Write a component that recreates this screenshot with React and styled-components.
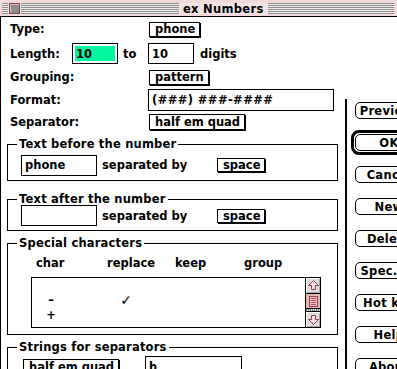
import React from "react";
import styled, { createGlobalStyle } from "styled-components";

const GlobalStyle = createGlobalStyle`
  html, body {
    margin: 0;
    padding: 0;
    background: #fff;
  }
  body {
    font-family: "DejaVu Sans", "Liberation Sans", sans-serif;
    font-weight: bold;
    font-size: 11.5px;
    color: #000;
  }
`;

const Window = styled.div`
  width: 397px;
  height: 369px;
  overflow: hidden;
  display: flex;
  flex-direction: column;
  background: #fff;
`;

const TitleBar = styled.div`
  height: 17px;
  box-sizing: border-box;
  flex-shrink: 0;
  background: #f3dada;
  border-bottom: 1px solid #000;
  padding: 3px 3px 2px 2px;
  display: flex;
`;

const Stripes = styled.div`
  flex: 1;
  display: flex;
  align-items: center;
  background: repeating-linear-gradient(
    to bottom,
    #8e8e8e 0 1px,
    #ececec 1px 2px
  );
`;

const CloseWrap = styled.div`
  height: 100%;
  background: #f3e4e4;
  padding: 0 1px;
  margin-left: 6px;
  display: flex;
  align-items: center;
`;

const CloseBox = styled.div`
  width: 11px;
  height: 11px;
  box-sizing: border-box;
  border: 1px solid #8a4040;
  background: #8d8d8d;
  box-shadow: inset 1px 1px 0 #d6c4c4;
`;

const Title = styled.div`
  height: 100%;
  display: flex;
  align-items: center;
  background: #f3e4e4;
  padding: 0 4px;
  margin-left: 158px;
  line-height: 12px;
  letter-spacing: 0.3px;
`;

const Body = styled.div`
  flex: 1;
  display: flex;
  border-left: 1px solid #000;
  min-height: 0;
`;

const LeftPane = styled.div`
  width: 344px;
  flex-shrink: 0;
  box-sizing: border-box;
  padding: 4px 0 0 6px;
`;

const Row = styled.div`
  display: flex;
  align-items: center;
  height: ${(p) => p.h}px;
  margin-top: ${(p) => p.mt || 0}px;
  padding-left: ${(p) => p.pl ?? 3}px;
`;

const Label = styled.span`
  display: inline-block;
  width: ${(p) => (p.w ? `${p.w}px` : "auto")};
  margin-left: ${(p) => p.ml || 0}px;
  white-space: nowrap;
  flex-shrink: 0;
`;

const Popup = styled.div`
  height: ${(p) => p.h || 15}px;
  box-sizing: border-box;
  border: 1px solid #000;
  box-shadow: 1px 1px 0 #000;
  background: #fff;
  padding: 0 4px 0 5px;
  display: flex;
  align-items: center;
  white-space: nowrap;
  margin-left: ${(p) => p.ml || 0}px;
`;

const TextField = styled.div`
  width: ${(p) => p.w}px;
  height: ${(p) => p.h || 21}px;
  box-sizing: border-box;
  border: 1px solid #000;
  padding: 2px;
  display: flex;
  flex-shrink: 0;
  margin-left: ${(p) => p.ml || 0}px;
`;

const FieldText = styled.span`
  flex: ${(p) => (p.selected ? 1 : "none")};
  background: ${(p) => (p.selected ? "#00f7a0" : "transparent")};
  display: flex;
  align-items: center;
  padding-left: 1px;
  white-space: nowrap;
  letter-spacing: ${(p) => p.ls || 0}px;
`;

const Group = styled.fieldset`
  width: 331px;
  box-sizing: border-box;
  margin: ${(p) => p.mt}px 0 0 0;
  border: 1px solid #000;
  padding: ${(p) => p.pt}px 0 ${(p) => p.pb}px 0;
  min-width: 0;
`;

const Legend = styled.legend`
  margin-left: 9px;
  padding: 0 2px;
  line-height: 12px;
  height: 12px;
  letter-spacing: 0.2px;
`;

const HeaderRow = styled.div`
  display: grid;
  grid-template-columns: 71px 68px 69px auto;
  padding-left: 28px;
  height: 14px;
  line-height: 14px;
`;

const ListBox = styled.div`
  width: 290px;
  height: 51px;
  box-sizing: border-box;
  margin: 7px 0 0 23px;
  border: 1px solid #000;
  display: flex;
`;

const ListRows = styled.div`
  flex: 1;
`;

const ListRow = styled.div`
  display: grid;
  grid-template-columns: 20px 20px;
  column-gap: 55px;
  padding-left: 9px;
  height: 15px;
  line-height: 15px;
  text-align: center;
`;

const Check = styled.span`
  font-size: 14px;
  line-height: 15px;
  font-weight: normal;
`;

const ScrollBar = styled.div`
  width: 15px;
  box-sizing: border-box;
  border-left: 1px solid #000;
  display: flex;
  flex-direction: column;
`;

const ArrowBox = styled.div`
  height: 15px;
  flex-shrink: 0;
  background: #dedede;
  box-shadow: inset 1px 1px 0 #fff, inset -1px -1px 0 #a8a8a8;
  display: flex;
  align-items: center;
  justify-content: center;
  border-top: ${(p) => (p.down ? "1px solid #000" : "none")};
  border-bottom: ${(p) => (p.down ? "none" : "1px solid #000")};
`;

const Thumb = styled.div`
  height: 15px;
  flex-shrink: 0;
  box-sizing: border-box;
  border-bottom: 1px solid #000;
  background: #e7b4b6;
  display: flex;
  align-items: center;
  justify-content: center;
`;

const Track = styled.div`
  flex: 1;
  background: repeating-linear-gradient(
    to right,
    #777 0 1px,
    #ddd 1px 2px
  );
`;

const RightPane = styled.div`
  flex: 1;
  min-width: 0;
  margin-top: 82px;
  border-left: 2px solid #000;
  padding: 3px 0 0 8px;
  display: flex;
  flex-direction: column;
  gap: 15px;
`;

const Button = styled.div`
  width: 68px;
  height: 17px;
  box-sizing: border-box;
  flex-shrink: 0;
  border: 1px solid #000;
  border-radius: 5px;
  background: #fff;
  display: flex;
  align-items: center;
  justify-content: center;
  white-space: nowrap;
  letter-spacing: 0.3px;
`;

const DefaultRing = styled.div`
  width: fit-content;
  border: 3px solid #000;
  border-radius: 8px;
  padding: 1px;
  margin: -4px 0 -4px -4px;
`;

const ArrowIcon = ({ down }) => (
  <svg width="11" height="11" viewBox="0 0 11 11">
    <path
      d="M5.5 0.5 L10.5 5.5 L7.5 5.5 L7.5 9.5 L3.5 9.5 L3.5 5.5 L0.5 5.5 Z"
      fill="#f6e6e8"
      stroke="#9a3c4c"
      strokeWidth="1"
      transform={down ? "rotate(180 5.5 5.5)" : undefined}
    />
  </svg>
);

const ThumbGrip = () => (
  <svg width="9" height="11" viewBox="0 0 9 11">
    <rect x="0.5" y="0.5" width="8" height="10" fill="#eec5c7" stroke="#9a3c4c" />
    {[2, 4, 6, 8].map((y) => (
      <line key={y} x1="2" x2="7" y1={y + 0.5} y2={y + 0.5} stroke="#b0505e" />
    ))}
  </svg>
);

const buttons = [
  "Previous",
  "OK",
  "Cancel",
  "New",
  "Delete",
  "Spec. ch",
  "Hot key",
  "Help",
  "About",
];

export default function App() {
  return (
    <>
      <GlobalStyle />
      <Window>
        <TitleBar>
          <Stripes>
            <CloseWrap>
              <CloseBox />
            </CloseWrap>
            <Title>ex Numbers</Title>
          </Stripes>
        </TitleBar>
        <Body>
          <LeftPane>
            <Row h={16} mt={0}>
              <Label w={139}>Type:</Label>
              <Popup h={15}>phone</Popup>
            </Row>
            <Row h={21} mt={6}>
              <Label w={62}>Length:</Label>
              <TextField w={46}>
                <FieldText selected>10</FieldText>
              </TextField>
              <Label w={25} ml={5}>to</Label>
              <TextField w={46}>
                <FieldText>10</FieldText>
              </TextField>
              <Label ml={6}>digits</Label>
            </Row>
            <Row h={16} mt={5}>
              <Label w={139}>Grouping:</Label>
              <Popup h={15}>pattern</Popup>
            </Row>
            <Row h={22} mt={4}>
              <Label w={138}>Format:</Label>
              <TextField w={186} h={22}>
                <FieldText ls={0.4}>(###) ###-####</FieldText>
              </TextField>
            </Row>
            <Row h={18} mt={2}>
              <Label w={139}>Separator:</Label>
              <Popup h={16}>half em quad</Popup>
            </Row>

            <Group mt={7} pt={5} pb={5}>
              <Legend>Text before the number</Legend>
              <Row h={20} pl={13}>
                <TextField w={76} h={21}>
                  <FieldText>phone</FieldText>
                </TextField>
                <Label w={115} ml={5}>separated by</Label>
                <Popup h={14}>space</Popup>
              </Row>
            </Group>

            <Group mt={12} pt={0} pb={4}>
              <Legend>Text after the number</Legend>
              <Row h={21} pl={13}>
                <TextField w={76} h={21} />
                <Label w={115} ml={5}>separated by</Label>
                <Popup h={14}>space</Popup>
              </Row>
            </Group>

            <Group mt={6} pt={7} pb={6}>
              <Legend>Special characters</Legend>
              <HeaderRow>
                <span>char</span>
                <span>replace</span>
                <span>keep</span>
                <span>group</span>
              </HeaderRow>
              <ListBox>
                <ListRows>
                  <ListRow>
                    <span> </span>
                    <span />
                  </ListRow>
                  <ListRow>
                    <span>–</span>
                    <Check>✓</Check>
                  </ListRow>
                  <ListRow>
                    <span>+</span>
                    <span />
                  </ListRow>
                </ListRows>
                <ScrollBar>
                  <ArrowBox>
                    <ArrowIcon />
                  </ArrowBox>
                  <Thumb>
                    <ThumbGrip />
                  </Thumb>
                  <Track />
                  <ArrowBox down>
                    <ArrowIcon down />
                  </ArrowBox>
                </ScrollBar>
              </ListBox>
            </Group>

            <Group mt={6} pt={3} pb={4}>
              <Legend>Strings for separators</Legend>
              <Row h={22} pl={15}>
                <Popup h={16}>half em quad</Popup>
                <TextField w={97} h={22} ml={26}>
                  <FieldText>h</FieldText>
                </TextField>
              </Row>
            </Group>
          </LeftPane>

          <RightPane>
            {buttons.map((b) =>
              b === "OK" ? (
                <DefaultRing key={b}>
                  <Button>{b}</Button>
                </DefaultRing>
              ) : (
                <Button key={b}>{b}</Button>
              )
            )}
          </RightPane>
        </Body>
      </Window>
    </>
  );
}
